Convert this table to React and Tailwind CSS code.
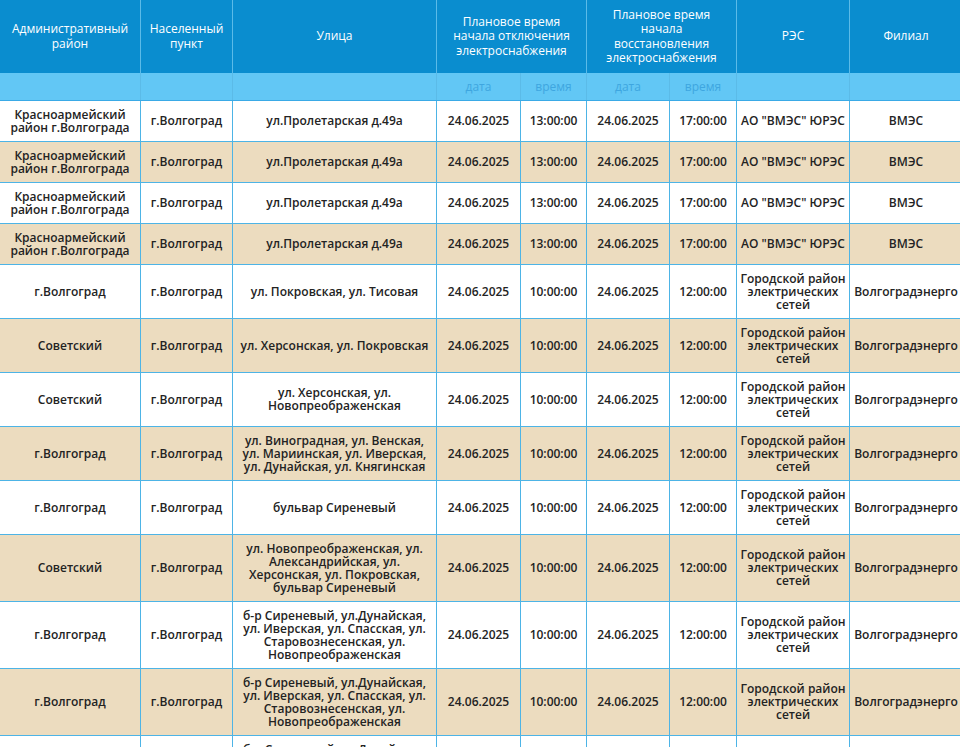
const font = { fontFamily: '"Open Sans", "Liberation Sans", sans-serif' };

const vmes = {
  d1: '24.06.2025', t1: '13:00:00', d2: '24.06.2025', t2: '17:00:00',
  res: 'АО "ВМЭС" ЮРЭС', branch: 'ВМЭС',
};
const gres = {
  d1: '24.06.2025', t1: '10:00:00', d2: '24.06.2025', t2: '12:00:00',
  res: 'Городской район электрических сетей', branch: 'Волгоградэнерго',
};

const sirenevy = 'б-р Сиреневый, ул.Дунайская, ул. Иверская, ул. Спасская, ул. Старовознесенская, ул. Новопреображенская';

const rows = [
  { area: 'Красноармейский район г.Волгограда', city: 'г.Волгоград', street: 'ул.Пролетарская д.49а', ...vmes },
  { area: 'Красноармейский район г.Волгограда', city: 'г.Волгоград', street: 'ул.Пролетарская д.49а', ...vmes },
  { area: 'Красноармейский район г.Волгограда', city: 'г.Волгоград', street: 'ул.Пролетарская д.49а', ...vmes },
  { area: 'Красноармейский район г.Волгограда', city: 'г.Волгоград', street: 'ул.Пролетарская д.49а', ...vmes },
  { area: 'г.Волгоград', city: 'г.Волгоград', street: 'ул. Покровская, ул. Тисовая', ...gres },
  { area: 'Советский', city: 'г.Волгоград', street: 'ул. Херсонская, ул. Покровская', ...gres },
  { area: 'Советский', city: 'г.Волгоград', street: 'ул. Херсонская, ул. Новопреображенская', ...gres },
  { area: 'г.Волгоград', city: 'г.Волгоград', street: 'ул. Виноградная, ул. Венская, ул. Мариинская, ул. Иверская, ул. Дунайская, ул. Княгинская', ...gres },
  { area: 'г.Волгоград', city: 'г.Волгоград', street: 'бульвар Сиреневый', ...gres },
  { area: 'Советский', city: 'г.Волгоград', street: 'ул. Новопреображенская, ул. Александрийская, ул. Херсонская, ул. Покровская, бульвар Сиреневый', ...gres },
  { area: 'г.Волгоград', city: 'г.Волгоград', street: sirenevy, ...gres },
  { area: 'г.Волгоград', city: 'г.Волгоград', street: sirenevy, ...gres },
  { area: 'г.Волгоград', city: 'г.Волгоград', street: sirenevy, ...gres },
];

const widths = [141, 92, 204, 84, 66, 83, 67, 113, 113];

export default function App() {
  return (
    <div className="w-[960px] overflow-hidden bg-white" style={font}>
      <table className="table-fixed border-collapse w-[963px] -ml-px text-[12px] leading-[13px]">
        <colgroup>
          {widths.map((w, i) => (
            <col key={i} style={{ width: w }} />
          ))}
        </colgroup>
        <thead>
          {/* Main header */}
          <tr className="bg-[#0a8dcf] text-white h-[73px]">
            <Th>Административный район</Th>
            <Th>Населенный пункт</Th>
            <Th>Улица</Th>
            <Th colSpan={2}>Плановое время начала отключения электроснабжения</Th>
            <Th colSpan={2}>Плановое время начала восстановления электроснабжения</Th>
            <Th>РЭС</Th>
            <Th>Филиал</Th>
          </tr>
          {/* Sub header */}
          <tr className="bg-[#62c7f5] text-[#3ea6e0] h-[27px]">
            <Sub />
            <Sub />
            <Sub />
            <Sub>дата</Sub>
            <Sub>время</Sub>
            <Sub>дата</Sub>
            <Sub>время</Sub>
            <Sub />
            <Sub />
          </tr>
        </thead>
        <tbody className="text-[#232323] font-semibold">
          {rows.map((r, i) => (
            <tr key={i} className={i % 2 === 1 ? 'bg-[#ecdcbf]' : 'bg-white'}>
              <Td>{r.area}</Td>
              <Td>{r.city}</Td>
              <Td>{r.street}</Td>
              <Td>{r.d1}</Td>
              <Td>{r.t1}</Td>
              <Td>{r.d2}</Td>
              <Td>{r.t2}</Td>
              <Td>{r.res}</Td>
              <Td>{r.branch}</Td>
            </tr>
          ))}
        </tbody>
      </table>
    </div>
  );
}

function Th({ children, colSpan }) {
  return (
    <th
      colSpan={colSpan}
      className="border-x border-[#5bbbe8] px-[8px] py-[7px] text-center align-middle font-medium leading-[14.5px]"
    >
      {children}
    </th>
  );
}

function Sub({ children }) {
  return (
    <th className="border-x border-b border-[#5bbbe8] border-b-[#3aaae6] px-[4px] text-center align-middle font-normal">
      {children}
    </th>
  );
}

function Td({ children }) {
  return (
    <td className="border border-[#4db4e6] px-[3px] py-[7px] text-center align-middle">
      {children}
    </td>
  );
}
